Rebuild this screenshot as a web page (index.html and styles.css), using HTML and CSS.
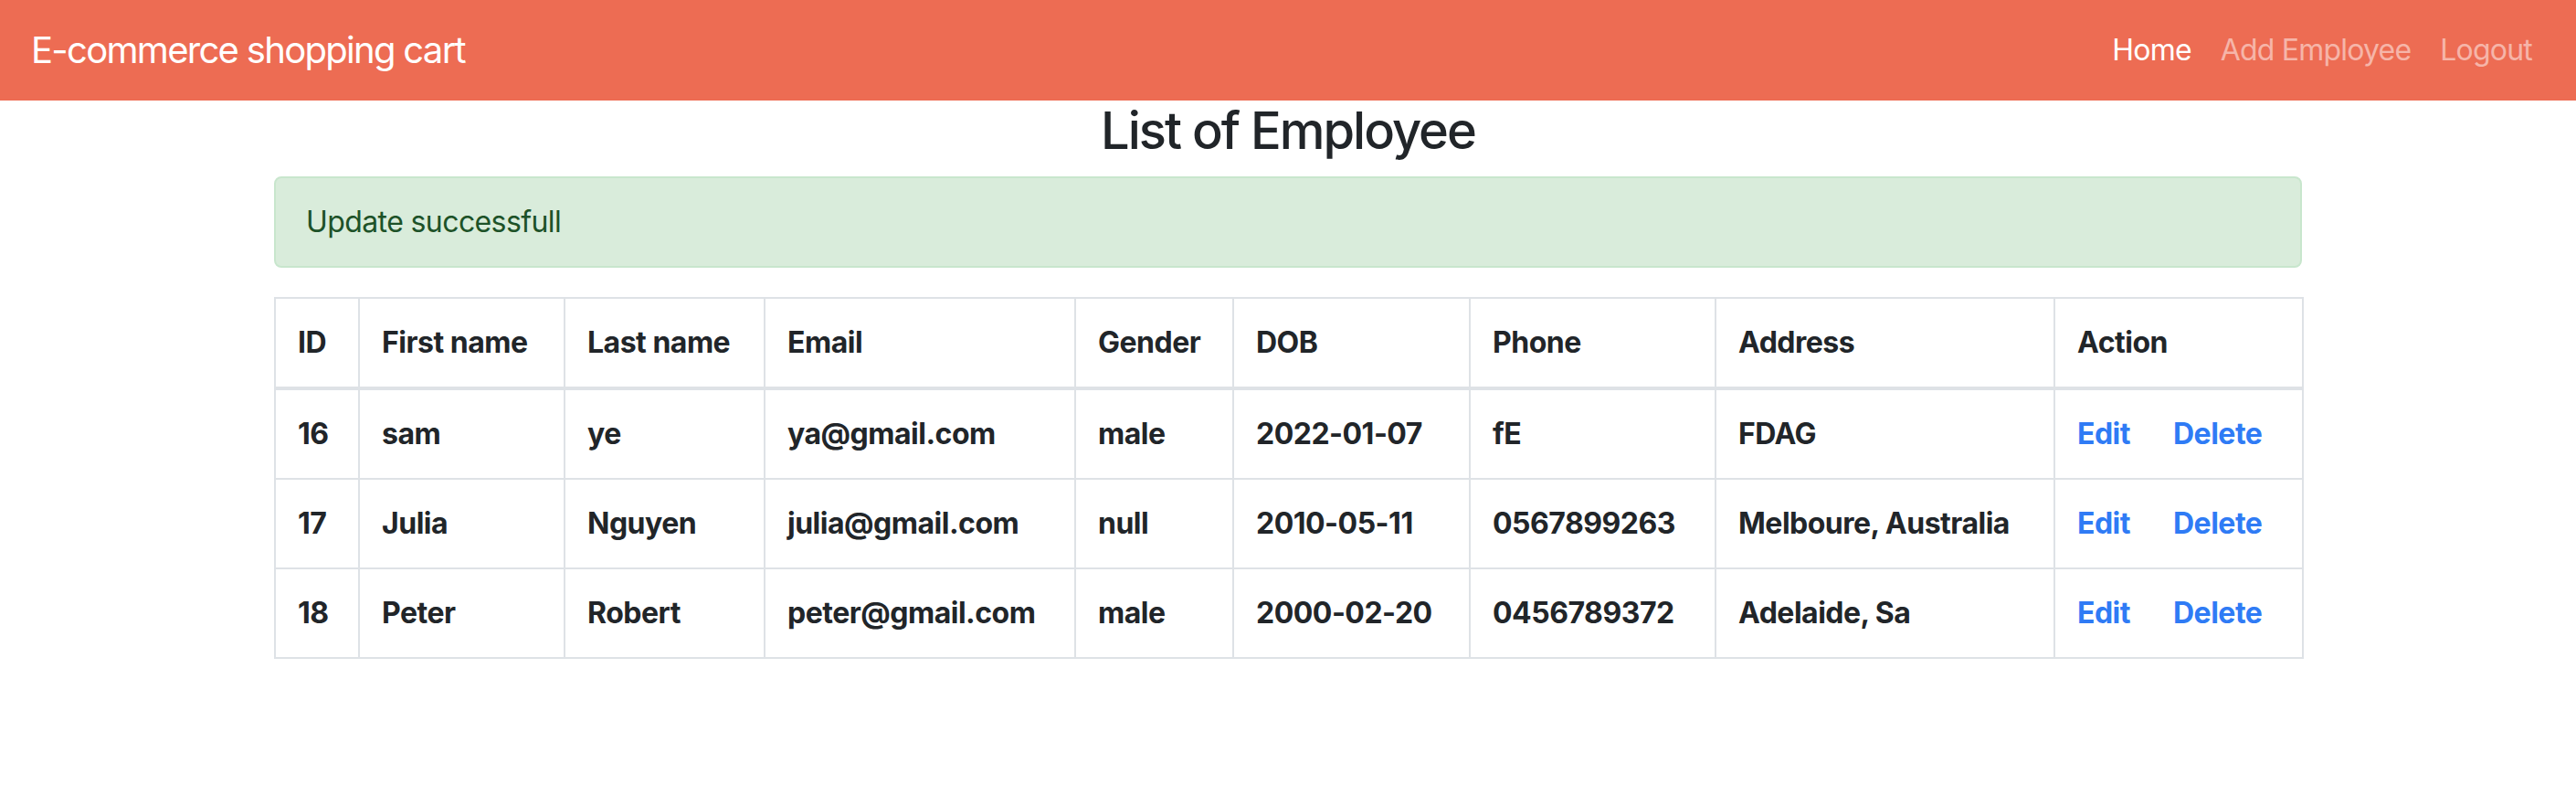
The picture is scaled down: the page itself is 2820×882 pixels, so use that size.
FILE: index.html
```html
<!DOCTYPE html>
<html lang="en">
<head>
<meta charset="utf-8">
<title>List of Employee</title>
<link rel="stylesheet" href="styles.css">
</head>
<body>
<nav class="navbar">
  <a class="brand" href="#">E-commerce shopping cart</a>
  <ul class="nav">
    <li><a class="nav-link active" href="#">Home</a></li>
    <li><a class="nav-link" href="#">Add Employee</a></li>
    <li><a class="nav-link" href="#">Logout</a></li>
  </ul>
</nav>
<main class="container">
  <h3 class="title">List of Employee</h3>
  <div class="alert">Update successfull</div>
  <table class="table">
    <colgroup>
      <col class="c-id"><col class="c-first"><col class="c-last"><col class="c-email"><col class="c-gender"><col class="c-dob"><col class="c-phone"><col class="c-address"><col class="c-action">
    </colgroup>
    <thead>
      <tr><th>ID</th><th>First name</th><th>Last name</th><th>Email</th><th>Gender</th><th>DOB</th><th>Phone</th><th>Address</th><th>Action</th></tr>
    </thead>
    <tbody>
      <tr><td>16</td><td>sam</td><td>ye</td><td>ya@gmail.com</td><td>male</td><td>2022-01-07</td><td>fE</td><td>FDAG</td><td><a class="act" href="#">Edit</a><a class="act del" href="#">Delete</a></td></tr>
      <tr><td>17</td><td>Julia</td><td>Nguyen</td><td>julia@gmail.com</td><td>null</td><td>2010-05-11</td><td>0567899263</td><td>Melboure, Australia</td><td><a class="act" href="#">Edit</a><a class="act del" href="#">Delete</a></td></tr>
      <tr><td>18</td><td>Peter</td><td>Robert</td><td>peter@gmail.com</td><td>male</td><td>2000-02-20</td><td>0456789372</td><td>Adelaide, Sa</td><td><a class="act" href="#">Edit</a><a class="act del" href="#">Delete</a></td></tr>
    </tbody>
  </table>
</main>
</body>
</html>
```
FILE: styles.css
```css
* { box-sizing: border-box; }
html, body { margin: 0; padding: 0; }
body {
  font-family: Inter, "Noto Sans", "Liberation Sans", sans-serif;
  font-size: 32px;
  line-height: 1.5;
  color: #212529;
  background: #fff;
}
a { text-decoration: none; }

.navbar {
  height: 110px;
  background: #ed6c53;
  display: flex;
  align-items: center;
  justify-content: space-between;
  padding: 0 32px;
}
.brand {
  color: #fff;
  font-size: 40px;
  line-height: 60px;
  letter-spacing: -1.7px;
  padding-left: 2px;
}
.nav {
  list-style: none;
  margin: 0;
  padding: 0;
  display: flex;
}
.nav-link {
  display: block;
  padding: 0 16px;
  color: rgba(255, 255, 255, 0.5);
  font-size: 32px;
  line-height: 48px;
  letter-spacing: -0.8px;
}
.nav-link.active { color: #fff; }

.container {
  width: 2220px;
  margin: 0 auto;
}
.title {
  margin: 0 0 16px;
  text-align: center;
  font-size: 56px;
  font-weight: 500;
  line-height: 1.2;
  letter-spacing: -2px;
  color: #212529;
}
.alert {
  background: #d9ecdb;
  border: 2px solid #c8e6cd;
  border-radius: 8px;
  color: #1d5228;
  padding: 24px 33px;
  line-height: 48px;
  letter-spacing: -0.6px;
  margin-bottom: 32px;
}
.table {
  width: 100%;
  border-collapse: collapse;
  table-layout: fixed;
}
.c-id { width: 92px; }
.c-first { width: 225px; }
.c-last { width: 219px; }
.c-email { width: 340px; }
.c-gender { width: 173px; }
.c-dob { width: 259px; }
.c-phone { width: 269px; }
.c-address { width: 371px; }
.c-action { width: 272px; }
.table th, .table td {
  border: 2px solid #dee2e6;
  padding: 24px;
  text-align: left;
  font-weight: 700;
  line-height: 48px;
  white-space: nowrap;
  letter-spacing: -0.5px;
  vertical-align: top;
}
.table thead th { border-bottom-width: 4px; }
.act { color: #2f7bf5; }
.act.del { margin-left: 47px; }
```
